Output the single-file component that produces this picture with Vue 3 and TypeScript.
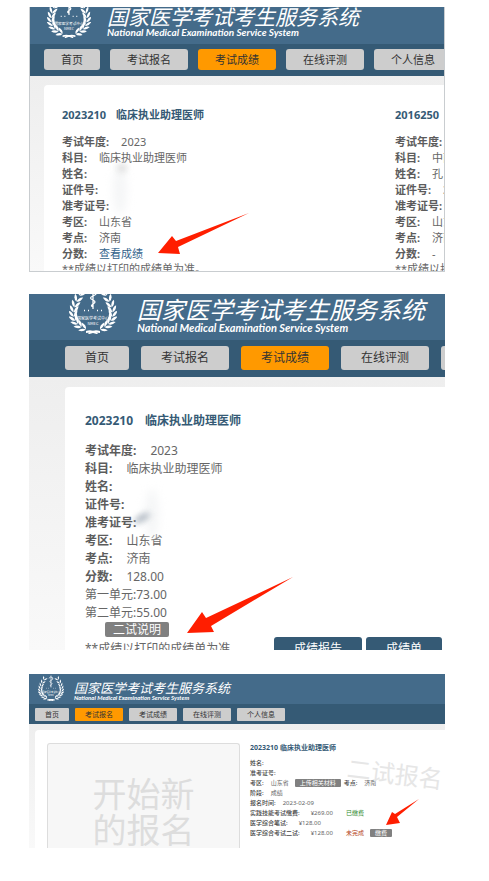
<script setup lang="ts">
interface Field {
  label: string
  value?: string
  link?: boolean
}

interface Leaf {
  x: number
  y: number
  angle: number
}

const tabs: string[] = ['首页', '考试报名', '考试成绩', '在线评测', '个人信息']

const results: { code: string; name: string; fields: Field[] }[] = [
  {
    code: '2023210',
    name: '临床执业助理医师',
    fields: [
      { label: '考试年度:', value: '2023' },
      { label: '科目:', value: '临床执业助理医师' },
      { label: '姓名:' },
      { label: '证件号:' },
      { label: '准考证号:' },
      { label: '考区:', value: '山东省' },
      { label: '考点:', value: '济南' },
      { label: '分数:', value: '查看成绩', link: true },
    ],
  },
  {
    code: '2016250',
    name: '',
    fields: [
      { label: '考试年度:' },
      { label: '科目:', value: '中西医' },
      { label: '姓名:', value: '孔' },
      { label: '证件号:', value: '3' },
      { label: '准考证号:' },
      { label: '考区:', value: '山东省' },
      { label: '考点:', value: '济南' },
      { label: '分数:', value: '-' },
    ],
  },
]

const scoreFields: Field[] = [
  ...results[0].fields.slice(0, 7),
  { label: '分数:', value: '128.00' },
]

// Leaves follow a quadratic curve from the ribbon up to the open top of the wreath.
const leaves: Leaf[] = []
for (let i = 0; i < 9; i++) {
  const t = 0.06 + i * 0.108
  const u = 1 - t
  const x = u * u * 19 + 2 * u * t * -7 + t * t * 14
  const y = u * u * 44 + 2 * u * t * 35 + t * t * 4
  const dx = 2 * u * -26 + 2 * t * 21
  const dy = 2 * u * -9 + 2 * t * -31
  leaves.push({ x, y, angle: (Math.atan2(dy, dx) * 180) / Math.PI })
}

const panels = [
  { id: 'list', active: 2 },
  { id: 'score', active: 2 },
  { id: 'signup', active: 1 },
]
</script>

<template>
  <main class="page">
    <section v-for="panel in panels" :key="panel.id" class="panel" :class="panel.id">
      <header class="brand">
        <svg class="emblem" viewBox="0 0 48 48" aria-hidden="true">
          <g v-for="side in [1, -1]" :key="side" :transform="side === 1 ? '' : 'translate(48 0) scale(-1 1)'">
            <g v-for="(leaf, i) in leaves" :key="i" :transform="`translate(${leaf.x} ${leaf.y}) rotate(${leaf.angle})`">
              <path d="M-1 0Q0-4 5.5-4.4Q4.5-.6-1 0Z" />
              <path d="M-1 0Q0 4 5.5 4.4Q4.5 .6-1 0Z" />
            </g>
            <path d="M17 45Q23 43 29 47L28 48.2Q22 45.4 17 47Z" />
          </g>
          <path class="line" d="M24 1V23M20 6Q23 2 27 5Q29 8 24 10Q19 12 24 14Q28 16 24 18Q21 20 24 21" />
          <path class="line" d="M15 24.5h1M19 24.5h1M28 24.5h1M32 24.5h1" />
          <text x="24" y="34" class="seal">国家医学考试中心</text>
          <text x="24" y="39" class="seal">NMEC</text>
        </svg>
        <div class="names">
          <h1>国家医学考试考生服务系统</h1>
          <p>National Medical Examination Service System</p>
        </div>
      </header>

      <nav class="tabs">
        <a v-for="(tab, i) in tabs" :key="tab" href="#" :class="{ active: i === panel.active }">{{ tab }}</a>
      </nav>

      <div class="body">
        <div v-if="panel.id === 'list'" class="card columns">
          <article v-for="result in results" :key="result.code">
            <h2>{{ result.code }}<span>{{ result.name }}</span></h2>
            <p v-for="field in result.fields" :key="field.label" class="row">
              <b>{{ field.label }}</b>
              <a v-if="field.link" href="#">{{ field.value }}</a>
              <span v-else>{{ field.value }}</span>
            </p>
            <p class="note">**成绩以打印的成绩单为准。</p>
          </article>
        </div>

        <div v-else-if="panel.id === 'score'" class="card">
          <h2>2023210<span>临床执业助理医师</span></h2>
          <p v-for="field in scoreFields" :key="field.label" class="row">
            <b>{{ field.label }}</b><span>{{ field.value }}</span>
          </p>
          <p class="row">第一单元:73.00</p>
          <p class="row">第二单元:55.00</p>
          <button type="button" class="chip">二试说明</button>
          <div class="foot">
            <p class="note">**成绩以打印的成绩单为准</p>
            <button type="button">成绩报告</button>
            <button type="button">成绩单</button>
          </div>
        </div>

        <div v-else class="card split">
          <button type="button" class="start">开始新<br />的报名</button>
          <article>
            <h2>2023210<span>临床执业助理医师</span></h2>
            <p class="row"><b>姓名:</b></p>
            <p class="row"><b>准考证号:</b></p>
            <p class="row">
              <b>考区:</b><span>山东省</span>
              <button type="button" class="chip">上传相关材料</button>
              <b>考点:</b><span>济南</span>
            </p>
            <p class="row"><b>阶段:</b><span>成绩</span></p>
            <p class="row"><b>报名时间:</b><span>2023-02-09</span></p>
            <p class="row fee"><span><b>实践技能考试缴费:</b><span>¥269.00</span></span><em class="paid">已缴费</em></p>
            <p class="row fee"><span><b>医学综合笔试:</b><span>¥128.00</span></span></p>
            <p class="row fee">
              <span><b>医学综合考试二试:</b><span>¥128.00</span></span>
              <em class="due">未完成</em>
              <button type="button" class="chip">缴费</button>
            </p>
            <div class="stamp">二试报名</div>
          </article>
        </div>
      </div>

      <i v-if="panel.id !== 'signup'" class="smudge"></i>
      <i v-if="panel.id !== 'signup'" class="smudge dark"></i>

      <svg v-if="panel.id === 'list'" class="arrow" viewBox="0 0 91 41" aria-hidden="true">
        <path d="M0 40L14 23L18 28L91 0L20 34L22 41Z" />
      </svg>
      <svg v-else-if="panel.id === 'score'" class="arrow" viewBox="0 0 106 56" aria-hidden="true">
        <path d="M0 56L15 35L19 41L106 0L24 49L27 55Z" />
      </svg>
      <svg v-else class="arrow" viewBox="0 0 33 26" aria-hidden="true">
        <path d="M0 26L6 13L9 15L33 0L11 18L14 24Z" />
      </svg>
    </section>
  </main>
</template>

<style>
body {
  margin: 0;
  background: #fff;
}
</style>

<style scoped>
.page {
  display: flex;
  flex-direction: column;
  gap: 22px;
  padding: 7px 44px 32px 29px;
  font-family: "Noto Sans", "Noto Sans CJK SC", sans-serif;
  color: #666;
}
h1, h2, p {
  margin: 0;
}
button {
  border: 0;
  padding: 0;
  font: inherit;
  cursor: pointer;
}
.panel {
  position: relative;
  overflow: hidden;
  font-size: var(--text);
  line-height: var(--line);
}
.list {
  --text: 11px;
  --line: 16px;
  --inset: 15px;
}
.score {
  --text: 12px;
  --line: 18px;
  --inset: 36px;
}
.signup {
  --text: 6px;
  --line: 10px;
  --inset: 6px;
  margin-top: 2px;
}
.list::after {
  content: "";
  position: absolute;
  inset: 0;
  border: 1px solid #c9cdd0;
  border-top: 0;
  pointer-events: none;
}

.brand {
  display: flex;
  align-items: flex-end;
  box-sizing: border-box;
  background: #446b8a;
  color: #fff;
  white-space: nowrap;
}
.emblem {
  flex: none;
  fill: #fff;
}
.emblem .line {
  fill: none;
  stroke: #fff;
  stroke-width: 1.3;
}
.seal {
  font: 4px "Noto Sans CJK SC", sans-serif;
  text-anchor: middle;
}
h1 {
  font-family: "Noto Sans CJK SC", sans-serif;
  font-weight: 400;
  font-style: italic;
}
.brand p {
  font-family: Lato, sans-serif;
  font-weight: 700;
  font-style: italic;
}
.list .brand { height: 37px; padding: 0 0 6px 18px; gap: 16px; }
.list .emblem { width: 44px; height: 44px; }
.list h1 { font-size: 21px; line-height: 22px; }
.list .brand p { font-size: 10px; line-height: 11px; }
.score .brand { height: 46px; padding: 0 0 6px 40px; gap: 20px; }
.score .emblem { width: 48px; height: 48px; }
.score h1 { font-size: 24px; line-height: 24px; }
.score .brand p { font-size: 11px; line-height: 13px; }
.signup .brand { height: 30px; padding: 0 0 3px 9px; gap: 10px; }
.signup .emblem { width: 26px; height: 26px; }
.signup h1 { font-size: 13px; line-height: 12px; }
.signup .brand p { font-size: 6px; line-height: 7px; }

.tabs {
  display: flex;
  padding-left: var(--inset);
  background: #355a75;
  white-space: nowrap;
}
.tabs a {
  flex: none;
  border-radius: 3px;
  background: #cdcdcd;
  color: #333;
  text-decoration: none;
}
.tabs .active {
  background: #ff9900;
}
.list .tabs { gap: 10px; padding-top: 5px; padding-bottom: 6px; }
.list .tabs a { padding: 0 17px; line-height: 21px; }
.score .tabs { gap: 12px; padding-top: 6px; padding-bottom: 7px; }
.score .tabs a { padding: 0 20px; line-height: 24px; }
.signup .tabs { gap: 6px; padding-top: 4px; padding-bottom: 3px; }
.signup .tabs a { padding: 0 10px; font-size: 7px; line-height: 13px; border-radius: 1px; }

.body {
  padding-left: var(--inset);
  background: linear-gradient(#eee, #f9f9f9);
}
.list .body { padding-top: 9px; }
.score .body { padding-top: 10px; }
.signup .body { padding-top: 6px; }
.card {
  background: #fff;
  border-top-left-radius: 4px;
}
.list .card { padding: 22px 0 0 18px; }
.score .card { padding: 25px 0 0 20px; }
.signup .card { padding: 13px 0 0 12px; }
.columns {
  display: grid;
  grid-template-columns: 333px 333px;
}
h2 {
  font-size: inherit;
  line-height: inherit;
  font-weight: 700;
  color: #355a75;
  white-space: nowrap;
}
.list h2 { margin-bottom: 11px; }
.list h2 span { margin-left: 10px; }
.score h2 { margin-bottom: 12px; }
.score h2 span { margin-left: 12px; }
.signup h2 { margin-bottom: 5px; font-size: 7px; }
.signup h2 span { margin-left: 2px; }

.row {
  display: flex;
  height: var(--line);
  white-space: nowrap;
}
.row b {
  font-weight: 500;
  color: #444;
}
.list b, .score b {
  font-weight: 700;
  color: #5c5c5c;
}
.row b + span, .row a { margin-left: 12px; }
.score .row b + span { margin-left: 14px; }
.row a {
  color: #33638c;
  text-decoration: none;
}
.note {
  overflow: hidden;
  white-space: nowrap;
}
.list .note { height: 10px; line-height: 14px; }
.chip {
  display: block;
  background: #808080;
  color: #fff;
  border-radius: 2px;
}
.score .chip {
  margin-left: 20px;
  padding: 0 8px;
  height: 15px;
  line-height: 15px;
}
.foot {
  display: flex;
  gap: 4px;
  height: 13px;
  overflow: hidden;
}
.foot .note {
  flex: 0 0 185px;
  padding-top: 3px;
}
.foot button {
  flex: none;
  height: 24px;
  padding: 0 20px;
  background: #355a75;
  color: #fff;
  border-radius: 3px;
}

.split {
  display: grid;
  grid-template-columns: 193px 1fr;
  gap: 10px;
}
.start {
  padding-top: 32px;
  border: 1px solid #ddd;
  border-bottom: 0;
  border-radius: 3px 3px 0 0;
  background: #f7f7f7;
  color: #ddd;
  font-size: 34px;
  line-height: 36px;
}
.split article {
  position: relative;
}
.signup .row b + span { margin-left: 7px; }
.signup .chip {
  align-self: center;
  height: 8px;
  margin: 0 3px 0 6px;
  padding: 0 5px;
  line-height: 8px;
  border-radius: 1px;
}
.fee > span { flex: 0 0 96px; }
.signup .fee b + span { margin-left: 11px; }
.fee em { font-style: normal; }
.paid { color: #2c8a2c; }
.due { color: #b5451b; }
.stamp {
  position: absolute;
  top: 14px;
  left: 97px;
  font-size: 24px;
  line-height: 34px;
  color: #e6e6e6;
  white-space: nowrap;
  transform: rotate(7deg);
}

.arrow {
  position: absolute;
  fill: #ff1e00;
}
.list .arrow { left: 129px; top: 206px; width: 91px; }
.score .arrow { left: 158px; top: 283px; width: 106px; }
.signup .arrow { left: 357px; top: 125px; width: 33px; }

.smudge {
  position: absolute;
  left: 84px;
  top: 158px;
  width: 14px;
  height: 50px;
  border-radius: 50%;
  background: #f5f6f7;
  filter: blur(4px);
}
.smudge.dark {
  left: 88px;
  top: 157px;
  width: 10px;
  height: 8px;
  background: #dcdcdc;
  filter: blur(3px);
}
.score .smudge { left: 116px; top: 195px; }
.score .smudge.dark {
  left: 104px;
  top: 221px;
  width: 18px;
  height: 6px;
  background: #a3adb8;
  transform: rotate(-30deg);
}
</style>
